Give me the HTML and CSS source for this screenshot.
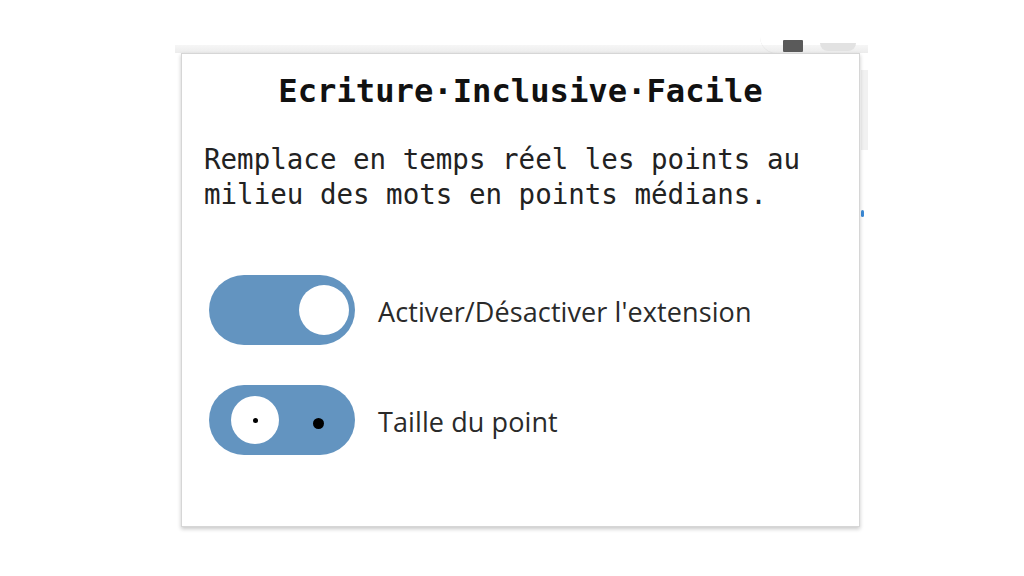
FILE: index.html
```html
<!DOCTYPE html>
<html lang="fr">
<head>
<meta charset="utf-8">
<link rel="stylesheet" href="styles.css">
</head>
<body>
<div class="stage">
  <div class="browserbar">
    <span class="tab-curve"></span>
    <span class="badge"></span>
    <span class="tab-wedge"></span>
  </div>
  <div class="side-right"><span class="bluemark"></span></div>
  <div class="popup">
    <h1 class="title">Ecriture·Inclusive·Facile</h1>
    <p class="desc">Remplace en temps réel les points au<br>milieu des mots en points médians.</p>
    <div class="options">
      <label class="option">
        <span class="toggle on"><span class="knob"></span></span>
        <span class="label">Activer/Désactiver l'extension</span>
      </label>
      <label class="option">
        <span class="toggle size"><span class="knob"><span class="dot small"></span></span><span class="dot big"></span></span>
        <span class="label">Taille du point</span>
      </label>
    </div>
  </div>
</div>
</body>
</html>
```

FILE: styles.css
```css
html, body {
  margin: 0;
  padding: 0;
  background: #ffffff;
  width: 1024px;
  height: 576px;
  overflow: hidden;
}

.stage {
  position: relative;
  width: 1024px;
  height: 576px;
  padding-top: 45px;
  box-sizing: border-box;
}

.browserbar {
  margin-left: 175px;
  width: 693px;
  height: 8px;
  background: linear-gradient(#f6f6f6, #ececec);
  position: relative;
}

.badge {
  position: absolute;
  left: 608px;
  top: -5px;
  width: 20px;
  height: 12px;
  background: #5a5a5a;
  border-radius: 1px;
}

.tab-wedge {
  position: absolute;
  left: 645px;
  top: -2px;
  width: 36px;
  height: 8px;
  background: #e2e2e2;
  border-radius: 0 0 18px 18px;
}

.tab-curve {
  position: absolute;
  left: 585px;
  top: -8px;
  width: 24px;
  height: 16px;
  border-bottom: 1px solid #e4e4e4;
  border-radius: 0 0 0 20px;
}

.side-right {
  position: absolute;
  left: 861px;
  top: 70px;
  width: 7px;
  height: 80px;
  background: #f1f1f1;
}

.bluemark {
  position: absolute;
  left: 0;
  top: 140px;
  width: 3px;
  height: 7px;
  background: #3b8ad6;
  border-radius: 2px;
}

.popup {
  margin-left: 181px;
  width: 679px;
  height: 474px;
  box-sizing: border-box;
  background: #ffffff;
  border: 1px solid #d6d6d6;
  box-shadow: 0 2px 4px rgba(0, 0, 0, 0.22);
  padding: 20px 22px 0 22px;
  position: relative;
}

.title {
  margin: 0;
  text-align: center;
  font-family: "DejaVu Sans Mono", "Liberation Mono", monospace;
  font-weight: bold;
  font-size: 32.2px;
  line-height: 34px;
  color: #111111;
}

.desc {
  margin: 34px 0 0 0;
  font-family: "DejaVu Sans Mono", "Liberation Mono", monospace;
  font-size: 27.5px;
  line-height: 35px;
  color: #222222;
}

.options {
  margin-top: 63px;
  padding-left: 5px;
  display: flex;
  flex-direction: column;
  gap: 40px;
}

.option {
  display: flex;
  align-items: center;
  gap: 23px;
}

.toggle {
  position: relative;
  display: flex;
  align-items: center;
  width: 146px;
  height: 70px;
  border-radius: 35px;
  background: #6394c0;
  box-sizing: border-box;
  padding: 0 10px;
  flex: none;
}

.toggle.on {
  justify-content: flex-end;
  padding-right: 6px;
}

.knob {
  width: 48px;
  height: 48px;
  border-radius: 50%;
  background: #ffffff;
  display: flex;
  align-items: center;
  justify-content: center;
  flex: none;
}

.toggle.on .knob {
  width: 50px;
  height: 50px;
}

.toggle.size {
  padding-left: 22px;
}

.dot {
  border-radius: 50%;
  background: #000000;
  display: block;
}

.dot.small {
  width: 5px;
  height: 5px;
}

.dot.big {
  position: absolute;
  left: 104px;
  top: 33px;
  width: 11px;
  height: 11px;
}

.label {
  font-family: "Open Sans", "Noto Sans", sans-serif;
  font-size: 27px;
  line-height: 36px;
  color: #2a2a2a;
  letter-spacing: 0.1px;
  padding-top: 4px;
}
```
